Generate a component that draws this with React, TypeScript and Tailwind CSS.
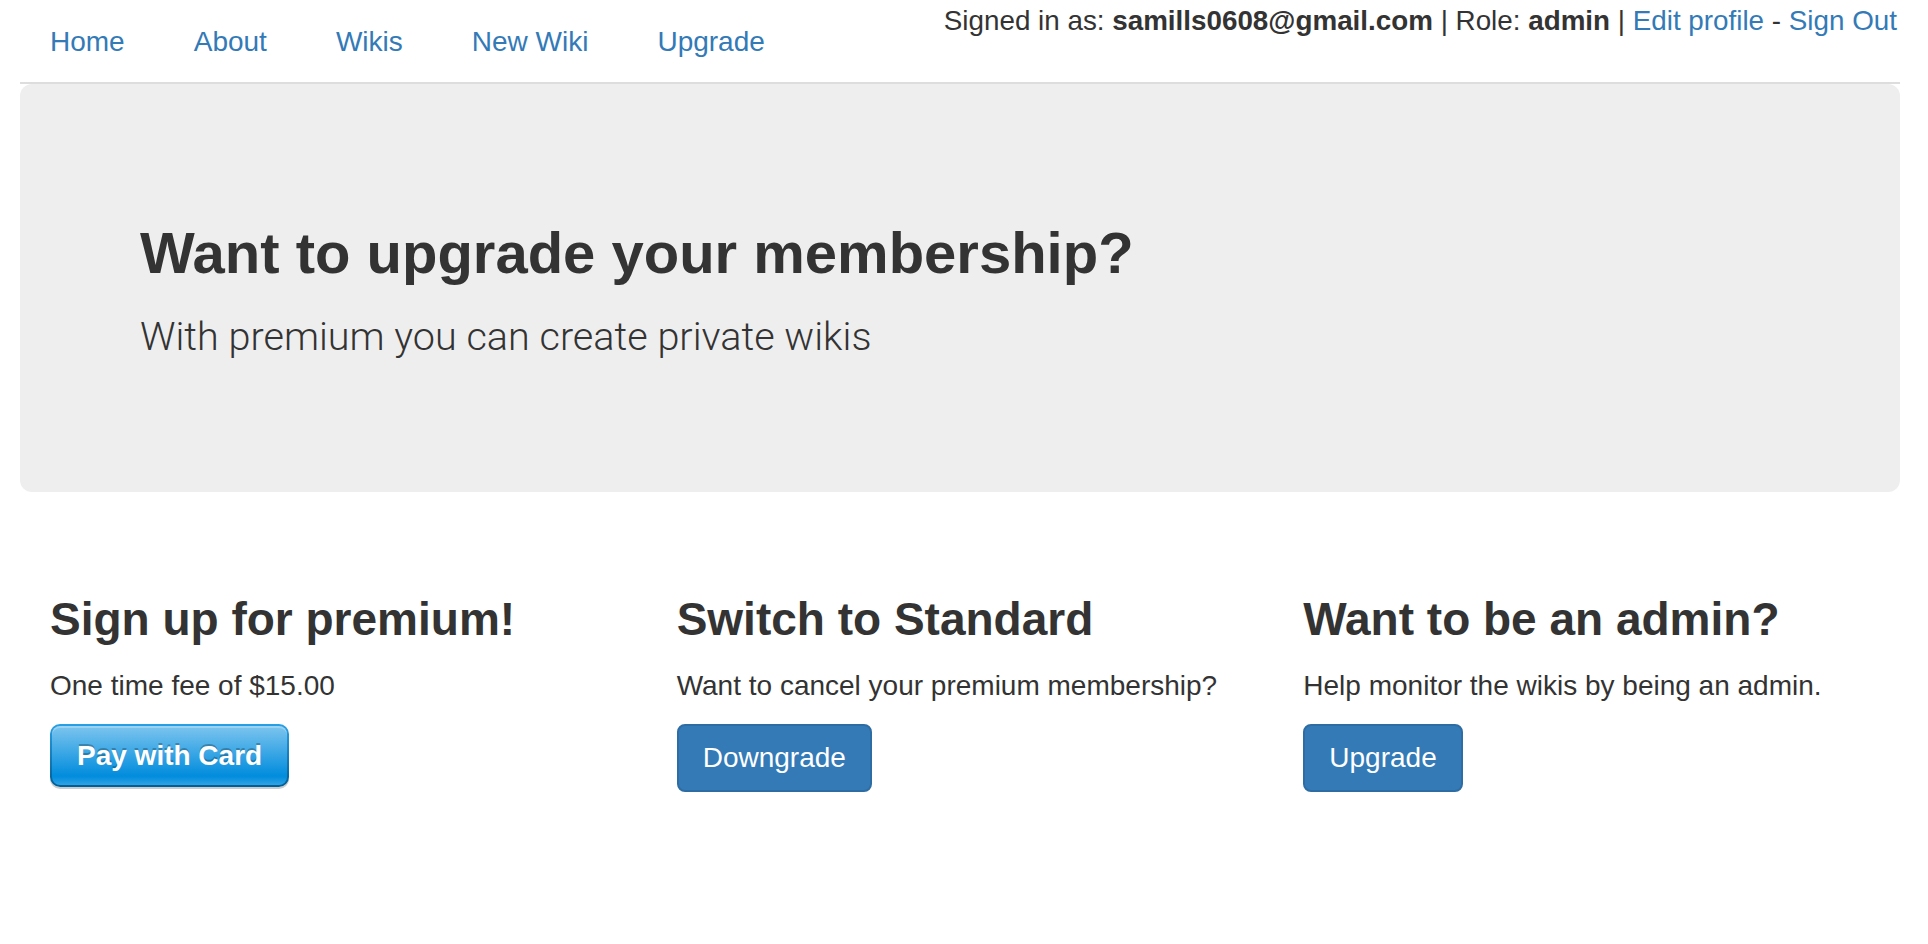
import React from "react";

const NAV_LINKS = ["Home", "About", "Wikis", "New Wiki", "Upgrade"];

const COLUMNS = [
  {
    title: "Sign up for premium!",
    text: "One time fee of $15.00",
    action: "stripe",
    label: "Pay with Card",
  },
  {
    title: "Switch to Standard",
    text: "Want to cancel your premium membership?",
    action: "button",
    label: "Downgrade",
  },
  {
    title: "Want to be an admin?",
    text: "Help monitor the wikis by being an admin.",
    action: "button",
    label: "Upgrade",
  },
];

const StripeButton = ({ label }: { label: string }) => (
  <button className="rounded-[10px] bg-gradient-to-b from-[#28a0e5] to-[#015e94] p-[2px] shadow-[0_2px_0_rgba(0,0,0,0.2)]">
    <span className="block h-[59px] rounded-[8px] bg-[linear-gradient(#7dc5ee,#008cdd_85%,#30a2e4)] px-[25px] text-[28px] font-bold leading-[59px] text-white shadow-[inset_0_2px_0_rgba(255,255,255,0.25)] [text-shadow:0_-2px_0_rgba(0,0,0,0.25)]">
      {label}
    </span>
  </button>
);

const PrimaryButton = ({ label }: { label: string }) => (
  <button className="rounded-[8px] border-2 border-[#2e6da4] bg-[#337ab7] px-[24px] py-[12px] text-[28px] leading-[40px] text-white">
    {label}
  </button>
);

const App = () => {
  return (
    <div className="min-h-[944px] bg-white font-['Liberation_Sans',Arial,sans-serif] text-[28px] text-[#333]">
      <div className="ml-[20px] w-[1880px]">
        <header className="flex h-[84px] justify-between border-b-2 border-[#ddd]">
          <nav className="flex gap-[69px] pl-[30px] pt-[22px]">
            {NAV_LINKS.map((link) => (
              <a key={link} href="#" className="leading-[40px] text-[#337ab7]">
                {link}
              </a>
            ))}
          </nav>
          <div className="pr-[3px] pt-[1px] text-[27.8px] leading-[40px]">
            Signed in as: <b>samills0608@gmail.com</b> | Role: <b>admin</b> |{" "}
            <a href="#" className="text-[#337ab7]">
              Edit profile
            </a>{" "}
            -{" "}
            <a href="#" className="text-[#337ab7]">
              Sign Out
            </a>
          </div>
        </header>

        <section className="h-[408px] rounded-[12px] bg-[#eee] pl-[120px] pt-[137px]">
          <h1 className="text-[58px] font-bold leading-[64px] text-[#333]">
            Want to upgrade your membership?
          </h1>
          <p className="mt-[24px] font-['Roboto',sans-serif] text-[39.6px] font-light leading-[56px] text-[#333]">
            With premium you can create private wikis
          </p>
        </section>

        <div className="mt-[102px] grid grid-cols-3">
          {COLUMNS.map((col) => (
            <div key={col.title} className="px-[30px]">
              <h2 className="text-[46px] font-bold leading-[50px]">{col.title}</h2>
              <p className="mt-[22px] leading-[40px]">{col.text}</p>
              <div className="mt-[18px]">
                {col.action === "stripe" ? (
                  <StripeButton label={col.label} />
                ) : (
                  <PrimaryButton label={col.label} />
                )}
              </div>
            </div>
          ))}
        </div>
      </div>
    </div>
  );
};

export default App;
